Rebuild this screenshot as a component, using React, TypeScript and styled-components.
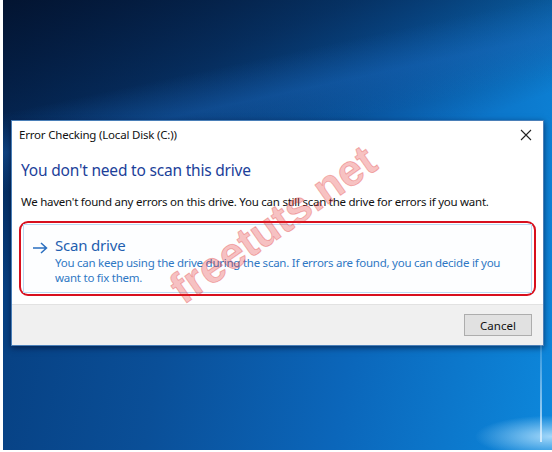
import React from "react";
import styled, { createGlobalStyle } from "styled-components";

const GlobalStyle = createGlobalStyle`
  html, body { margin: 0; padding: 0; background: #ffffff; }
  body { width: 552px; height: 452px; overflow: hidden; }
`;

const Desktop = styled.div`
  position: relative;
  margin-left: 3px;
  width: 549px;
  height: 450px;
  box-sizing: border-box;
  padding: 120px 0 0 8px;
  overflow: hidden;
  background:
    radial-gradient(ellipse 110px 30px at 100% 97%, rgba(190, 230, 255, 0.85), rgba(80, 170, 240, 0) 70%),
    linear-gradient(168deg, rgba(0,0,0,0) 0%, rgba(0,0,0,0) 20%, rgba(30, 110, 200, 0.35) 27%, rgba(0,0,0,0) 34%),
    linear-gradient(160deg, rgba(3, 18, 45, 0.95) 0%, rgba(3, 20, 50, 0.6) 20%, rgba(3, 22, 55, 0) 45%),
    linear-gradient(100deg, #063c7c 0%, #0a4f98 35%, #0b66ba 65%, #0d88dc 100%);
  font-family: "Noto Sans", "Open Sans", sans-serif;
`;

const Beam = styled.div`
  position: absolute;
  right: 10px;
  top: 320px;
  width: 2px;
  height: 122px;
  background: linear-gradient(180deg, rgba(255,255,255,0), rgba(220,240,255,0.85));
`;

const Dialog = styled.div`
  width: 533px;
  height: 226px;
  box-sizing: border-box;
  background: #ffffff;
  border: 1px solid #4a7fb8;
  box-shadow: 0 2px 6px rgba(0, 10, 40, 0.6);
  display: flex;
  flex-direction: column;
`;

const TitleBar = styled.div`
  height: 27px;
  display: flex;
  align-items: center;
  justify-content: space-between;
  padding: 0 8px 0 7px;
`;

const TitleText = styled.span`
  font-size: 11.5px;
  color: #111;
  letter-spacing: -0.2px;
`;

const CloseIcon = styled.svg`
  width: 12px;
  height: 12px;
  margin-right: 3px;
`;

const Content = styled.div`
  flex: 1;
  padding: 11px 7px 0 7px;
  display: flex;
  flex-direction: column;
`;

const Heading = styled.div`
  font-size: 15.5px;
  line-height: 22px;
  color: #1c3f9a;
  margin-left: 2px;
  letter-spacing: -0.2px;
`;

const Body = styled.div`
  margin-top: 13px;
  margin-left: 2px;
  font-size: 11.5px;
  line-height: 15px;
  color: #111;
  letter-spacing: -0.25px;
`;

const Highlight = styled.div`
  margin-top: 12px;
  height: 75px;
  box-sizing: border-box;
  border: 2px solid #d8101e;
  border-radius: 9px;
  padding: 1px 2px;
`;

const CommandLink = styled.div`
  height: 100%;
  box-sizing: border-box;
  border: 1px solid #bcdcf4;
  background: #fdfeff;
  display: flex;
  padding: 10px 8px 0 8px;
  gap: 7px;
`;

const Arrow = styled.svg`
  width: 16px;
  height: 12px;
  margin-top: 7px;
  flex: none;
`;

const LinkTexts = styled.div`
  display: flex;
  flex-direction: column;
`;

const LinkTitle = styled.div`
  font-size: 15px;
  line-height: 20px;
  color: #1f5fb0;
  letter-spacing: -0.2px;
`;

const LinkDesc = styled.div`
  font-size: 11.5px;
  line-height: 15px;
  color: #2f78c4;
  letter-spacing: -0.25px;
  max-width: 455px;
`;

const Footer = styled.div`
  height: 41px;
  box-sizing: border-box;
  background: #f0f0f0;
  border-top: 1px solid #e2e2e2;
  display: flex;
  justify-content: flex-end;
  align-items: flex-start;
  padding: 9px 11px 0 0;
`;

const Button = styled.button`
  width: 68px;
  height: 22px;
  box-sizing: border-box;
  background: #e1e1e1;
  border: 1px solid #adadad;
  font-family: "Noto Sans", "Open Sans", sans-serif;
  font-size: 11.5px;
  color: #111;
  padding: 0;
`;

const Watermark = styled.div`
  position: absolute;
  left: 172px;
  top: 268px;
  font-family: "Liberation Sans", Arial, sans-serif;
  font-weight: bold;
  font-size: 44px;
  color: rgba(230, 40, 40, 0.28);
  -webkit-text-stroke: 1px rgba(220, 30, 30, 0.3);
  transform: rotate(-35deg);
  transform-origin: left center;
  pointer-events: none;
  white-space: nowrap;
`;

export default function App() {
  return (
    <>
      <GlobalStyle />
      <Desktop>
        <Beam />
        <Dialog>
          <TitleBar>
            <TitleText>Error Checking (Local Disk (C:))</TitleText>
            <CloseIcon viewBox="0 0 12 12">
              <path d="M1 1 L11 11 M11 1 L1 11" stroke="#222" strokeWidth="1.1" fill="none" />
            </CloseIcon>
          </TitleBar>
          <Content>
            <Heading>You don't need to scan this drive</Heading>
            <Body>
              We haven't found any errors on this drive. You can still scan the drive for errors if you want.
            </Body>
            <Highlight>
              <CommandLink>
                <Arrow viewBox="0 0 16 12">
                  <path d="M1 6 H14.5 M9 1 L14.5 6 L9 11" stroke="#2a6fc0" strokeWidth="1.5" fill="none" />
                </Arrow>
                <LinkTexts>
                  <LinkTitle>Scan drive</LinkTitle>
                  <LinkDesc>
                    You can keep using the drive during the scan. If errors are found, you can decide if you want to fix them.
                  </LinkDesc>
                </LinkTexts>
              </CommandLink>
            </Highlight>
          </Content>
          <Footer>
            <Button>Cancel</Button>
          </Footer>
        </Dialog>
        <Watermark>freetuts.net</Watermark>
      </Desktop>
    </>
  );
}
